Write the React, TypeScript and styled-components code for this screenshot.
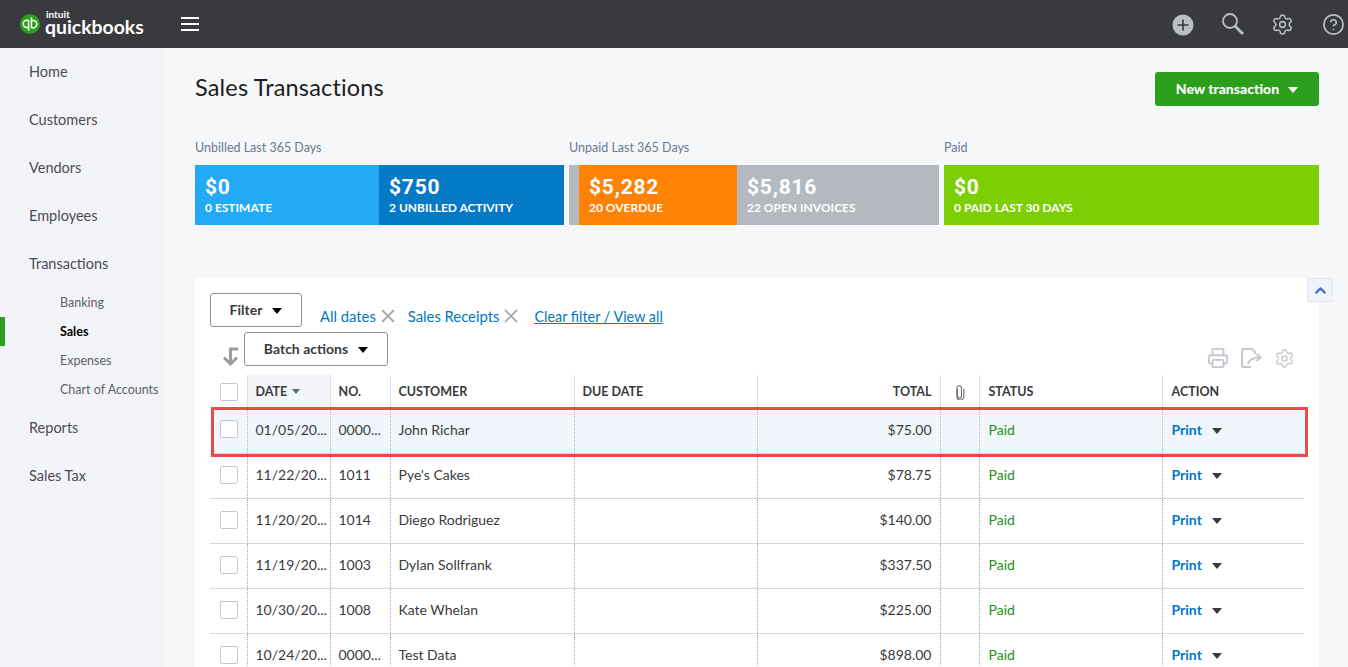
import React from 'react';
import styled, { createGlobalStyle } from 'styled-components';
import { Settings, CircleHelp, Printer, ChevronUp } from 'lucide-react';

const FONT = `Lato, "Open Sans", "Liberation Sans", sans-serif`;

const GlobalStyle = createGlobalStyle`
  html, body {
    margin: 0;
    height: 100%;
    overflow: hidden;
    background: #f4f5f8;
    font-family: ${FONT};
    color: #393a3d;
  }
`;

const Page = styled.div`
  width: 1348px;
  height: 667px;
  overflow: hidden;
  display: flex;
  flex-direction: column;
`;

const TopBar = styled.header`
  flex: 0 0 48px;
  background: #393a3d;
  display: flex;
  align-items: center;
  padding-left: 20px;
`;

const LogoWrap = styled.div`
  display: flex;
  align-items: center;
  gap: 5px;
  width: 161px;
`;

const LogoText = styled.div`
  display: flex;
  flex-direction: column;
  color: #fff;
  line-height: 1;
  margin-top: -2px;
`;

const LogoIntuit = styled.span`
  font-size: 10px;
  font-weight: 700;
  height: 8px;
  line-height: 8px;
  margin-left: 1px;
`;

const LogoName = styled.span`
  font-size: 19.4px;
  font-weight: 700;
  line-height: 18px;
`;

const TopIcons = styled.div`
  margin-left: auto;
  display: flex;
  align-items: center;
  gap: 27.5px;
  color: #babec5;
  padding-right: 3.5px;
`;

const PlusSlot = styled.span`
  display: flex;
  margin-top: 2px;
`;

const Body = styled.div`
  flex: 1;
  display: flex;
  min-height: 0;
`;

const Sidebar = styled.nav`
  flex: 0 0 165px;
  background: #f3f4f8;
`;

const NavItem = styled.div`
  height: 48px;
  line-height: 48px;
  padding-left: 29px;
  font-size: 14.5px;
  color: #4b4c50;
`;

const SubItem = styled.div<{ $active?: boolean }>`
  height: 29px;
  line-height: 29px;
  padding-left: ${p => (p.$active ? 55 : 60)}px;
  font-size: 12.5px;
  color: ${p => (p.$active ? '#000' : '#5d6068')};
  font-weight: ${p => (p.$active ? 700 : 400)};
  border-left: ${p => (p.$active ? '5px solid #2ca01c' : '0')};
`;

const Main = styled.main`
  flex: 1;
  background: #f6f7f9;
  padding: 24px 29px 0 30px;
  min-width: 0;
`;

const TitleRow = styled.div`
  display: flex;
  justify-content: space-between;
  align-items: flex-start;
  height: 34px;
`;

const Title = styled.h1`
  margin: -1px 0 0;
  font-size: 23.5px;
  line-height: 32px;
  font-weight: 400;
  letter-spacing: 0.17px;
  color: #1c1d20;
`;

const NewButton = styled.button`
  width: 164px;
  height: 34px;
  background: #2ca01c;
  border: 0;
  border-radius: 3px;
  padding: 0 0 2px;
  color: #fff;
  font-family: ${FONT};
  font-size: 14px;
  font-weight: 900;
  display: flex;
  align-items: center;
  justify-content: center;
  gap: 9px;
`;

const Caret = styled.span<{ $color?: string }>`
  display: inline-block;
  width: 0;
  height: 0;
  margin-top: 3px;
  border-left: 5.5px solid transparent;
  border-right: 5.5px solid transparent;
  border-top: 6px solid ${p => p.$color || '#000'};
`;

const Summary = styled.div`
  display: grid;
  grid-template-columns: 369px 370px 375px;
  column-gap: 5px;
  margin-top: 34px;
`;

const GroupLabel = styled.div`
  font-size: 12.5px;
  line-height: 16px;
  color: #6b7897;
  height: 25px;
`;

const TileRow = styled.div`
  display: flex;
  height: 60px;
`;

const Tile = styled.div<{ $bg: string; $w?: number }>`
  ${p => (p.$w ? `flex: 0 0 ${p.$w}px;` : 'flex: 1;')}
  background-color: ${p => p.$bg};
  background-image: linear-gradient(
    135deg,
    rgba(255, 255, 255, 0.035) 25%,
    transparent 25%,
    transparent 50%,
    rgba(255, 255, 255, 0.035) 50%,
    rgba(255, 255, 255, 0.035) 75%,
    transparent 75%
  );
  background-size: 4px 4px;
  color: #fff;
  padding: 11px 10px 0;
  box-sizing: border-box;
  overflow: hidden;
  white-space: nowrap;
`;

const TileLead = styled(Tile)`
  padding: 0;
`;

const Amount = styled.div`
  font-size: 21px;
  line-height: 23px;
  font-weight: 700;
  font-family: Roboto, ${FONT};
  letter-spacing: 0.8px;
`;

const TileCaption = styled.div`
  font-size: 12px;
  line-height: 15px;
  font-weight: 700;
  margin-top: 1px;
`;

const Panel = styled.section`
  position: relative;
  margin-top: 53px;
  background: #fff;
  padding: 15px 15px 0;
  height: 400px;
  box-sizing: border-box;
`;

const CollapseTab = styled.div`
  position: absolute;
  top: 0;
  right: -14px;
  width: 26px;
  height: 24px;
  box-sizing: border-box;
  background: #f1f3fa;
  border: 1px solid #e3e5ef;
  color: #4a6dbf;
  display: flex;
  align-items: center;
  justify-content: center;
`;

const FilterRow = styled.div`
  display: flex;
  align-items: flex-start;
  height: 34px;
`;

const OutlineButton = styled.button`
  height: 34px;
  box-sizing: border-box;
  background: #fff;
  border: 1px solid #8d9096;
  border-radius: 3px;
  padding: 0 0 2px;
  font-family: ${FONT};
  font-size: 14px;
  font-weight: 700;
  color: #393a3d;
  display: flex;
  align-items: center;
  justify-content: center;
  gap: 10px;
`;

const FilterButton = styled(OutlineButton)`
  width: 92px;
`;

const BatchButton = styled(OutlineButton)`
  width: 144px;
`;

const Chips = styled.div`
  display: flex;
  align-items: center;
  margin: 14px 0 0 18px;
  height: 18px;
  font-size: 14.8px;
  color: #0077c5;
`;

const Chip = styled.span`
  display: flex;
  align-items: center;
  gap: 5px;
  margin-right: 13px;
  color: #0077c5;

  svg {
    color: #a9abb0;
  }
`;

const ClearLink = styled.a`
  margin-left: 3px;
  font-size: 14.4px;
  color: #0077c5;
  text-decoration: underline;
`;

const BatchRow = styled.div`
  display: flex;
  align-items: center;
  height: 34px;
  margin-top: 5px;
`;

const SortArrow = styled.div`
  width: 34px;
  padding: 15px 0 0 12px;
  box-sizing: border-box;
  height: 34px;
  color: #9a9ca1;
`;

const TableTools = styled.div`
  margin-left: auto;
  display: flex;
  align-items: center;
  gap: 12px;
  color: #c4c8cf;
  padding: 18px 9px 0 0;
`;

const TableWrap = styled.div`
  position: relative;
  margin-top: 9px;
`;

const Table = styled.table`
  width: 1094px;
  table-layout: fixed;
  border-collapse: collapse;
  font-size: 14px;
`;

const HeadCell = styled.th<{ $right?: boolean; $sorted?: boolean; $center?: boolean }>`
  height: 33px;
  padding: 0 8px;
  box-sizing: border-box;
  font-size: 12.5px;
  font-weight: 700;
  text-align: ${p => (p.$right ? 'right' : p.$center ? 'center' : 'left')};
  color: #393a3d;
  background: ${p => (p.$sorted ? '#f4f5f8' : '#fff')};
  border-left: 1px solid #dcdee2;
  white-space: nowrap;

  &:first-child {
    border-left: 0;
    background: #fff;
  }

  &:nth-last-child(-n + 2) {
    padding-left: 9px;
  }
`;

const Row = styled.tr<{ $hot?: boolean }>`
  background: ${p => (p.$hot ? '#f1f6fd' : '#fff')};
  border-bottom: 1px solid #d4d7dc;
`;

const Cell = styled.td<{ $right?: boolean; $tight?: boolean }>`
  height: 45px;
  padding: 0 ${p => (p.$tight ? 0 : 8)}px 2px 8px;
  box-sizing: border-box;
  border-left: 1px dotted #a9abb0;
  text-align: ${p => (p.$right ? 'right' : 'left')};
  color: #393a3d;
  white-space: nowrap;
  overflow: hidden;

  &:first-child {
    border-left: 0;
  }

  &:nth-last-child(-n + 2) {
    padding-left: 9px;
  }
`;

const CheckBox = styled.span`
  display: block;
  width: 18px;
  height: 18px;
  box-sizing: border-box;
  border: 1px solid #c4c6cb;
  border-radius: 2px;
  background: #fff;
  margin-left: 2px;
`;

const StatusText = styled.span`
  color: #248f17;
`;

const ActionLink = styled.span`
  display: inline-flex;
  align-items: center;
  gap: 10px;
  color: #0077c5;
  font-weight: 700;
`;

const SortCaret = styled.span`
  display: inline-block;
  margin-left: 5px;
  vertical-align: 2px;
  border-left: 4px solid transparent;
  border-right: 4px solid transparent;
  border-top: 5px solid #4d6d8f;
`;

const ClipSlot = styled.span`
  display: inline-flex;
  vertical-align: middle;
`;

const RedBox = styled.div`
  position: absolute;
  top: 32px;
  left: 1px;
  width: 1097px;
  height: 50px;
  box-sizing: border-box;
  border: 3px solid #e94b47;
  pointer-events: none;
`;

const COLS = [37, 83, 60, 184, 183, 183, 39, 183, 142];

const ROWS = [
  { date: '01/05/20...', no: '0000...', customer: 'John Richar', total: '$75.00' },
  { date: '11/22/20...', no: '1011', customer: "Pye's Cakes", total: '$78.75' },
  { date: '11/20/20...', no: '1014', customer: 'Diego Rodriguez', total: '$140.00' },
  { date: '11/19/20...', no: '1003', customer: 'Dylan Sollfrank', total: '$337.50' },
  { date: '10/30/20...', no: '1008', customer: 'Kate Whelan', total: '$225.00' },
  { date: '10/24/20...', no: '0000...', customer: 'Test Data', total: '$898.00' },
];

const QbMark = () => (
  <svg width="20" height="20" viewBox="0 0 21 21">
    <circle cx="10.5" cy="10.5" r="10.5" fill="#2ca01c" />
    <g fill="none" stroke="#fff" strokeWidth="1.6">
      <path d="M9 6.500H7.200a3.800 3.800 0 0 0 0 7.600H9" />
      <path d="M9 6.500V17.500" />
      <path d="M12 6.900h1.800a3.800 3.800 0 0 1 0 7.600H12" />
      <path d="M12 3.500V14.500" />
    </g>
  </svg>
);

const Burger = () => (
  <svg width="18" height="14" viewBox="0 0 18 14" fill="#fff">
    <rect y="0" width="18" height="2" />
    <rect y="6" width="18" height="2" />
    <rect y="12" width="18" height="2" />
  </svg>
);

const PlusDisc = () => (
  <svg width="22" height="22" viewBox="0 0 22 22">
    <circle cx="11" cy="11" r="10.5" fill="#babec5" />
    <path d="M11 5.500v11M5.500 11h11" stroke="#393a3d" strokeWidth="1.6" />
  </svg>
);

const SearchIcon = () => (
  <svg width="22" height="22" viewBox="0 0 22 22" fill="none" stroke="currentColor">
    <circle cx="8" cy="8" r="7" strokeWidth="1.800" />
    <path d="M13 13l8 8" strokeWidth="2.800" />
  </svg>
);

const CloseIcon = () => (
  <svg width="14" height="14" viewBox="0 0 14 14" fill="none" stroke="currentColor" strokeWidth="1.900">
    <path d="M1 1l12 12M13 1L1 13" />
  </svg>
);

const DownArrow = () => (
  <svg width="17" height="19" viewBox="0 0 17 19" fill="none" stroke="currentColor" strokeWidth="3">
    <path d="M16 2H8.500v15" />
    <path d="M2 10.500l6.500 6.500 6.500-6.500" />
  </svg>
);

const ExportIcon = () => (
  <svg width="21" height="20" viewBox="0 0 21 20" fill="none" stroke="currentColor" strokeWidth="2">
    <path d="M10 19H2.500A1.500 1.500 0 0 1 1 17.500v-15A1.500 1.500 0 0 1 2.500 1H11l3 3v2" />
    <path d="M7 16c1-4 5-6.500 12-6.500" />
    <path d="M15.500 6l4 3.500-4 3.500" />
  </svg>
);

const ClipIcon = () => (
  <svg width="11" height="15" viewBox="0 0 11 15" fill="none" stroke="#6b6c72" strokeWidth="1.100">
    <path d="M3.500 4v7a2 2 0 0 0 4 0V3a2.300 2.300 0 0 0-4.600 0v8.500a3.500 3.500 0 0 0 7 0V4" />
  </svg>
);

const App: React.FC = () => {
  return (
    <Page>
      <GlobalStyle />
      <TopBar>
        <LogoWrap>
          <QbMark />
          <LogoText>
            <LogoIntuit>intuit</LogoIntuit>
            <LogoName>quickbooks</LogoName>
          </LogoText>
        </LogoWrap>
        <Burger />
        <TopIcons>
          <PlusSlot>
            <PlusDisc />
          </PlusSlot>
          <SearchIcon />
          <Settings size={23} strokeWidth={1.6} />
          <CircleHelp size={23} strokeWidth={1.8} />
        </TopIcons>
      </TopBar>
      <Body>
        <Sidebar>
          <NavItem>Home</NavItem>
          <NavItem>Customers</NavItem>
          <NavItem>Vendors</NavItem>
          <NavItem>Employees</NavItem>
          <NavItem>Transactions</NavItem>
          <SubItem>Banking</SubItem>
          <SubItem $active>Sales</SubItem>
          <SubItem>Expenses</SubItem>
          <SubItem>Chart of Accounts</SubItem>
          <NavItem>Reports</NavItem>
          <NavItem>Sales Tax</NavItem>
        </Sidebar>
        <Main>
          <TitleRow>
            <Title>Sales Transactions</Title>
            <NewButton>
              New transaction <Caret $color="#fff" />
            </NewButton>
          </TitleRow>
          <Summary>
            <div>
              <GroupLabel>Unbilled Last 365 Days</GroupLabel>
              <TileRow>
                <Tile $bg="#1fa8f4" $w={184}>
                  <Amount>$0</Amount>
                  <TileCaption>0 ESTIMATE</TileCaption>
                </Tile>
                <Tile $bg="#0077c5">
                  <Amount>$750</Amount>
                  <TileCaption>2 UNBILLED ACTIVITY</TileCaption>
                </Tile>
              </TileRow>
            </div>
            <div>
              <GroupLabel>Unpaid Last 365 Days</GroupLabel>
              <TileRow>
                <TileLead $bg="#b3b7bf" $w={10} />
                <Tile $bg="#ff8000" $w={158}>
                  <Amount>$5,282</Amount>
                  <TileCaption>20 OVERDUE</TileCaption>
                </Tile>
                <Tile $bg="#b3b7bf">
                  <Amount>$5,816</Amount>
                  <TileCaption>22 OPEN INVOICES</TileCaption>
                </Tile>
              </TileRow>
            </div>
            <div>
              <GroupLabel>Paid</GroupLabel>
              <TileRow>
                <Tile $bg="#7ace00">
                  <Amount>$0</Amount>
                  <TileCaption>0 PAID LAST 30 DAYS</TileCaption>
                </Tile>
              </TileRow>
            </div>
          </Summary>
          <Panel>
            <CollapseTab>
              <ChevronUp size={17} strokeWidth={3} />
            </CollapseTab>
            <FilterRow>
              <FilterButton>
                Filter <Caret />
              </FilterButton>
              <Chips>
                <Chip>
                  All dates <CloseIcon />
                </Chip>
                <Chip>
                  Sales Receipts <CloseIcon />
                </Chip>
                <ClearLink>Clear filter / View all</ClearLink>
              </Chips>
            </FilterRow>
            <BatchRow>
              <SortArrow>
                <DownArrow />
              </SortArrow>
              <BatchButton>
                Batch actions <Caret />
              </BatchButton>
              <TableTools>
                <Printer size={22} strokeWidth={2} />
                <ExportIcon />
                <Settings size={21} strokeWidth={1.5} />
              </TableTools>
            </BatchRow>
            <TableWrap>
              <Table>
                <colgroup>
                  {COLS.map((w, i) => (
                    <col key={i} width={w} />
                  ))}
                </colgroup>
                <thead>
                  <tr>
                    <HeadCell>
                      <CheckBox />
                    </HeadCell>
                    <HeadCell $sorted>
                      DATE
                      <SortCaret />
                    </HeadCell>
                    <HeadCell>NO.</HeadCell>
                    <HeadCell>CUSTOMER</HeadCell>
                    <HeadCell>DUE DATE</HeadCell>
                    <HeadCell $right>TOTAL</HeadCell>
                    <HeadCell $center>
                      <ClipSlot>
                        <ClipIcon />
                      </ClipSlot>
                    </HeadCell>
                    <HeadCell>STATUS</HeadCell>
                    <HeadCell>ACTION</HeadCell>
                  </tr>
                </thead>
                <tbody>
                  {ROWS.map((r, i) => (
                    <Row key={r.date} $hot={i === 0}>
                      <Cell>
                        <CheckBox />
                      </Cell>
                      <Cell $tight>{r.date}</Cell>
                      <Cell $tight>{r.no}</Cell>
                      <Cell>{r.customer}</Cell>
                      <Cell />
                      <Cell $right>{r.total}</Cell>
                      <Cell />
                      <Cell>
                        <StatusText>Paid</StatusText>
                      </Cell>
                      <Cell>
                        <ActionLink>
                          Print <Caret $color="#393a3d" />
                        </ActionLink>
                      </Cell>
                    </Row>
                  ))}
                </tbody>
              </Table>
              <RedBox />
            </TableWrap>
          </Panel>
        </Main>
      </Body>
    </Page>
  );
};

export default App;
